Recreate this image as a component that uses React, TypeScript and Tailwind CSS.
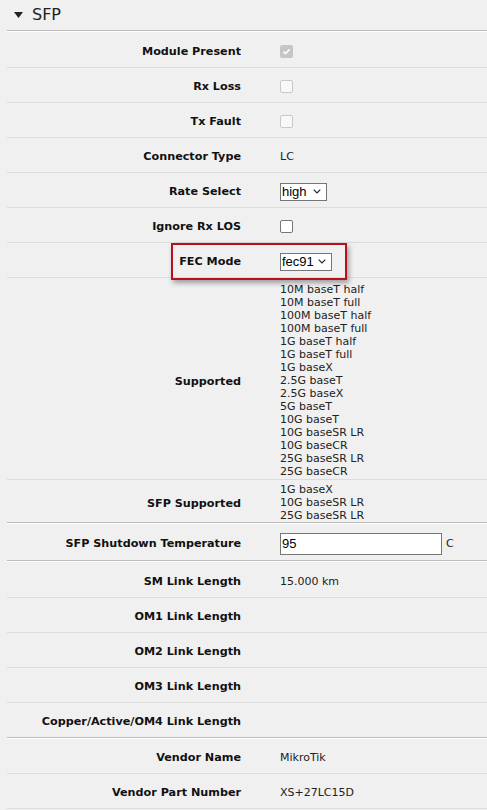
import React from "react";

const supported = [
  "10M baseT half",
  "10M baseT full",
  "100M baseT half",
  "100M baseT full",
  "1G baseT half",
  "1G baseT full",
  "1G baseX",
  "2.5G baseT",
  "2.5G baseX",
  "5G baseT",
  "10G baseT",
  "10G baseSR LR",
  "10G baseCR",
  "25G baseSR LR",
  "25G baseCR",
];

const sfpSupported = ["1G baseX", "10G baseSR LR", "25G baseSR LR"];

function Divider() {
  return <div className="h-[2px] border-t border-[#bcbcbc] bg-white" />;
}

function Check({ checked, disabled }: { checked?: boolean; disabled?: boolean }) {
  if (checked) {
    return (
      <div className="flex h-[13px] w-[13px] items-center justify-center rounded-[2px] bg-[#c6c6c6]">
        <svg width="9" height="9" viewBox="0 0 9 9">
          <path d="M1.5 4.6 L3.6 6.6 L7.6 2.2" fill="none" stroke="#fff" strokeWidth="1.6" />
        </svg>
      </div>
    );
  }
  return (
    <div
      className={
        disabled
          ? "h-[13px] w-[13px] rounded-[2px] border border-[#c9c9c9] bg-[#f8f8f8]"
          : "h-[13px] w-[13px] rounded-[2px] border border-[#767676] bg-white"
      }
    />
  );
}

function Select({ value, width }: { value: string; width: string }) {
  return (
    <div
      className={`flex h-[18px] items-center justify-between border border-[#767676] bg-white pl-[1px] pr-[5px] font-['Liberation_Sans',Arial,sans-serif] text-[13px] text-black ${width}`}
    >
      <span>{value}</span>
      <svg width="8" height="5" viewBox="0 0 8 5">
        <path d="M0.7 0.7 L4 4 L7.3 0.7" fill="none" stroke="#222" strokeWidth="1.1" />
      </svg>
    </div>
  );
}

function Row({
  label,
  children,
  h = "h-[35px]",
}: {
  label: string;
  children?: React.ReactNode;
  h?: string;
}) {
  return (
    <div className={`flex items-center border-b border-[#dcdcdc] pt-[3px] ${h}`}>
      <div className="w-[234px] text-right text-[11.2px] font-bold text-[#111]">{label}</div>
      <div className="flex items-center pl-[39px] text-[#222]">{children}</div>
    </div>
  );
}

export default function App() {
  return (
    <div className="min-h-screen bg-[#f0f0f0] font-['DejaVu_Sans',Verdana,sans-serif] text-[11px] leading-[13px]">
      <div className="flex h-[30px] items-center gap-[9px] pl-[14px] text-[16px] leading-none text-[#222]">
        <svg width="9" height="6" viewBox="0 0 9 6">
          <path d="M0 0 H9 L4.5 6 Z" fill="#222" />
        </svg>
        <span>SFP</span>
      </div>

      <div className="ml-[7px]">
        <Divider />
        <Row label="Module Present" h="h-[36px]">
          <Check checked />
        </Row>
        <Row label="Rx Loss">
          <Check disabled />
        </Row>
        <Row label="Tx Fault">
          <Check disabled />
        </Row>
        <Row label="Connector Type">LC</Row>
        <Row label="Rate Select">
          <Select value="high" width="w-[47px]" />
        </Row>
        <Row label="Ignore Rx LOS">
          <Check />
        </Row>
        <div className="relative">
          <Row label="FEC Mode">
            <Select value="fec91" width="w-[52px]" />
          </Row>
          <div className="pointer-events-none absolute left-[164px] top-0 h-[37px] w-[176px] border-2 border-[#b5121b] shadow-[2px_3px_5px_rgba(0,0,0,0.35)]" />
        </div>

        <div className="flex items-center border-b border-[#dcdcdc] pt-[5px] pb-[1px]">
          <div className="w-[234px] pt-[2px] text-right text-[11.2px] font-bold text-[#111]">Supported</div>
          <div className="flex flex-col pl-[39px] text-[#222]">
            {supported.map((s) => (
              <span key={s}>{s}</span>
            ))}
          </div>
        </div>

        <div className="flex items-center pt-[3px]">
          <div className="w-[234px] pt-[2px] text-right text-[11.2px] font-bold text-[#111]">SFP Supported</div>
          <div className="flex flex-col pl-[39px] text-[#222]">
            {sfpSupported.map((s) => (
              <span key={s}>{s}</span>
            ))}
          </div>
        </div>
        <Divider />

        <div className="flex h-[36px] items-center pt-[3px]">
          <div className="w-[234px] text-right text-[11.2px] font-bold text-[#111]">SFP Shutdown Temperature</div>
          <div className="flex items-center pl-[39px] text-[#222]">
            <div className="flex h-[22px] w-[162px] items-center border border-[#767676] bg-white pl-[1px] font-['Liberation_Sans',Arial,sans-serif] text-[13px] text-black">
              95
            </div>
            <span className="pl-[4px]">C</span>
          </div>
        </div>
        <Divider />

        <Row label="SM Link Length" h="h-[36px]">
          15.000 km
        </Row>
        <Row label="OM1 Link Length" />
        <Row label="OM2 Link Length" />
        <Row label="OM3 Link Length" />
        <div className="flex h-[34px] items-center pt-[3px]">
          <div className="w-[234px] text-right text-[11.2px] font-bold text-[#111]">Copper/Active/OM4 Link Length</div>
        </div>
        <Divider />
        <Row label="Vendor Name">MikroTik</Row>
        <Row label="Vendor Part Number">XS+27LC15D</Row>
      </div>
    </div>
  );
}
